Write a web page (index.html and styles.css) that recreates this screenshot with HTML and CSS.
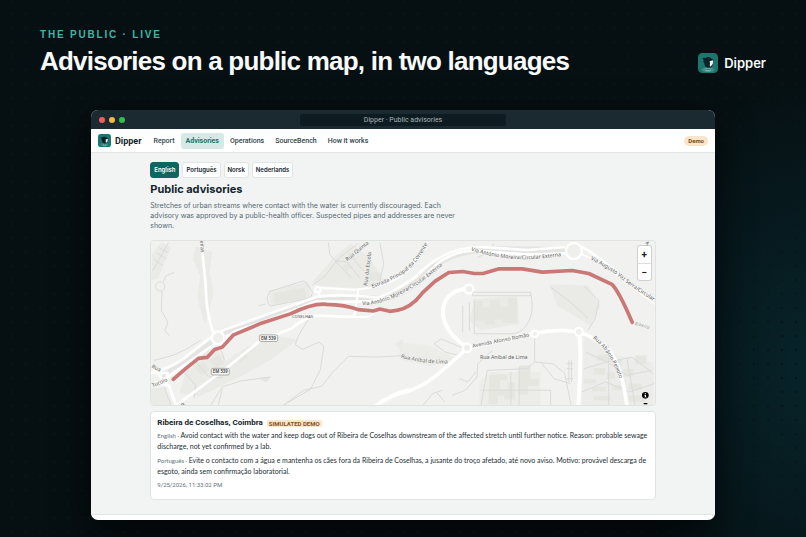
FILE: index.html
```html
<!DOCTYPE html>
<html lang="en">
<head>
<meta charset="utf-8">
<meta name="viewport" content="width=device-width, initial-scale=1">
<title>Dipper · Public advisories</title>
<link rel="stylesheet" href="styles.css">
</head>
<body>
<svg class="sprite" aria-hidden="true">
  <symbol id="dipper" viewBox="0 0 60 60">
    <rect width="60" height="60" rx="13" fill="#1c766e"/>
    <path d="M13 15l11-1c6-3 13-2 17 3l7 4-4 4c3 10-1 18-12 23-8-3-13-9-13-17-4-2-3-7-2-9z" fill="#0c2229"/>
    <path d="M35 25l10-3c1 9-1 14-8 19-3-4-1-7-1-10z" fill="#eef6f4"/>
    <ellipse cx="30" cy="50" rx="17" ry="5" fill="none" stroke="#8fc7bf" stroke-width="1.5"/>
    <ellipse cx="30" cy="50" rx="9" ry="3" fill="none" stroke="#d5ece8" stroke-width="1.5"/>
  </symbol>
</svg>
<header class="intro">
  <div>
    <p class="eyebrow">THE PUBLIC · LIVE</p>
    <h1>Advisories on a public map, in two languages</h1>
  </div>
  <div class="brand brand-large"><svg aria-hidden="true"><use href="#dipper"/></svg>Dipper</div>
</header>
<section class="window">
  <div class="titlebar">
    <div class="lights"><i class="red"></i><i class="amber"></i><i class="green"></i></div>
    <div class="address">Dipper · Public advisories</div>
  </div>
  <nav class="nav">
    <a class="brand" href="#"><svg aria-hidden="true"><use href="#dipper"/></svg>Dipper</a>
    <div class="links">
      <a href="#">Report</a><a href="#" class="current">Advisories</a><a href="#">Operations</a><a href="#">SourceBench</a><a href="#">How it works</a>
    </div>
    <span class="demo">Demo</span>
  </nav>
  <main>
    <div class="column">
      <div class="languages">
        <button class="selected">English</button><button>Português</button><button>Norsk</button><button>Nederlands</button>
      </div>
      <h2>Public advisories</h2>
      <p class="lead">Stretches of urban streams where contact with the water is currently discouraged. Each advisory was approved by a public-health officer. Suspected pipes and addresses are never shown.</p>
      <div class="map">
        <svg class="canvas" viewBox="15 15 1518 495" role="img" aria-label="Map of the Coselhas area">
          <defs>
            <path id="t-via1" d="M652 208Q700 209 765 178Q830 145 930 58"/>
            <path id="t-estrada" d="M682 157Q760 130 795 98Q830 65 880 -30"/>
            <path id="t-via2" d="M980 44Q1070 72 1150 70Q1210 68 1290 54"/>
            <path id="t-vaz" d="M1340 71Q1390 94 1435 130Q1480 168 1580 225"/>
            <path id="t-peixoto" d="M1347 308Q1400 350 1429 433L1434 450"/>
            <path id="t-lima" d="M768 366Q835 389 940 383"/>
            <path id="t-romao" d="M985 337L1190 296"/>
            <path id="t-stream" d="M1474 270Q1500 270 1545 296"/>
          </defs>
          <rect x="15" y="15" width="1518" height="498" fill="#f1f1ef"/>
          <g fill="#eaebe7">
            <path d="M18 55l28-36 30 14-40 94-20 6z"/>
            <path d="M150 30l50 20 -8 60 12 60-15 60-12 35-22-75 8-70-22-50z"/>
            <path d="M500 140l70-80 48-38 52 40 48 70-40 28-158-10z"/>
            <path d="M370 165l118-28 10 50-120 25z"/>
            <path d="M130 375l80-40 30 42 60-40 90-35 70 10-90 65-120 65-90 42-60-10z"/>
            <path d="M15 460l40-5 25 55-65 3z"/>
            <path d="M990 190l130-10 5 85-115 20-35-30z"/>
            <path d="M1215 145l120 5 35 60-30 60-100-60z"/>
            <path d="M1320 300l100 60 110 20v133h-215z" opacity=".6"/>
            <path d="M765 320l90 10 80 40-80 22-90-20z" opacity=".7"/>
            <path d="M1040 410h150v100h-185v-70z" opacity=".7"/>
            <path d="M750 325l25-15v40z"/>
          </g>
          <g fill="#e5e6e0">
            <path d="M991 195h26v20h20v-22h30v22h25v-28h26v75h-42v-10h-24v15h-30v-12h-31z"/>
            <path d="M1036 418h52v16h-20v28h22v-20h22v52h-32v-12h-20v25h-28z"/>
            <path d="M1125 390h34v40h26v22h-34v26h-28z"/>
            <path d="M1360 358h32v18h-32zM1405 372h30v18h-30zM1350 398h34v20h-34zM1320 430h36v14h-36zM1390 410h24v20h-24zM1440 400h30v24h-30zM1345 455h42v14h-42zM1405 450h28v16h-28zM1455 445h40v20h-40zM1350 482h50v14h-50zM1475 360h34v26h-34zM1455 480h50v20h-50z"/>
            <path d="M385 173l92-18 7 32-95 18zM190 375l28-15 20 22-28 16zM145 395l28-15 20 24-27 15zM275 365l24-14 10 14-24 14zM340 430l38-6-16 18zM590 95l18-14 12 14-18 14zM670 110h38v24h-38z"/>
          </g>
          <g fill="none" stroke="#dadbd9" stroke-width="3" stroke-linejoin="round">
            <path d="M20 105l28-50 20-35M24 70l28 20M33 52l28 16M40 36l28 15M48 165l-2 60 20 35-10 25 14 15M42 138a14 14 0 1 0 1 28a14 14 0 1 0-1-28M52 138l8-18 25-10"/>
            <path d="M365 185l8-18 102-32 12 10 15 25-5 16-118 25-10-5zM340 210l20-5"/>
            <path d="M500 150l40-30 40-52 60-46M550 20l4 35 16 20 35 2 40 50M610 50l45 55M705 20l12 65-15 60M570 75l50 52"/>
            <path d="M25 375l55-15 40-18 45-28M225 340l12 35M145 375l45 50 40 2M105 400l45 50-5 40M55 455l20 55"/>
            <path d="M490 250l-30 50-10 28 22 14 50-22 14 12-10 70-30 60-82 48-15 28M415 510l60-45 55-12 35-45 45-45 90 2 80-5"/>
            <path d="M195 510l35-55 55-18 90-12M230 460l-12 48"/>
            <path d="M985 170h175v10H985zM1160 175c15 60-10 118-60 120H990M955 210v80M975 200v85M990 190v105"/>
            <path d="M1218 153l60 45 55 50M1320 150l46 45-12 55-22 35"/>
            <path d="M955 338l-65-28-22 15 35 25 40 10M1045 345l-45 40-2 40-35 40-40 15M1172 305v75l-25 20-118 5-20 110M1172 380l55 5 35 28 20 98M1100 410v102M1125 395v115M1010 465h210v45M1325 350l65 30 75-15 65 50M1320 400l70-20 60 40 75-15M1315 470l70-30 75 30 72-25M1395 330v180M1450 370l25 140M1190 380l40 50 50 15"/>
            <path d="M835 510l30-35 28-10M875 470l25 30M945 430l25 10 25-30M1000 65l40-22 8-20"/>
            <path d="M1275 375v65M1283 375v65M1268 385h20M1268 400h20M1268 430h20"/>
          </g>
          <path d="M60 420L230 290Q400 235 500 192Q600 180 700 190Q790 180 870 90Q930 38 1060 40L1260 43" fill="none" stroke="#e4e5e3" stroke-width="20" stroke-linecap="round"/>
          <g fill="none" stroke="#fff" stroke-width="8" stroke-linecap="round" stroke-linejoin="round">
            <path d="M167 18L180 150Q182 240 204 292"/>
            <path d="M20 410Q70 400 110 372L190 310L230 285L515 183Q600 174 700 186Q745 170 810 125Q900 32 1010 33L1150 42L1260 34"/>
            <path d="M58 430L110 393L205 327L270 287Q410 240 510 198L640 198Q760 196 820 140L880 82Q930 45 990 44L1150 56L1265 52"/>
            <path d="M517 164L525 183M518 156L630 162 680 155Q755 140 790 103L850 20M640 162l-12 82h40q24-8 25-30" stroke-width="6"/>
            <path d="M92 510L240 400L345 315L440 278Q470 250 515 240L628 244"/>
            <path d="M20 398l50 55 20 58M30 440l42 12M15 413h50l-6 25"/>
            <path d="M1315 33Q1370 65 1430 118Q1480 168 1533 190"/>
            <path d="M1315 55Q1380 80 1440 135L1533 205" stroke-width="4"/>
          </g>
          <g fill="none" stroke="#fff" stroke-width="12" stroke-linecap="round">
            <path d="M960 160Q895 170 895 235Q900 290 968 336"/>
            <path d="M765 475Q835 460 905 395L970 338L1172 294Q1240 277 1305 290Q1355 302 1400 350Q1435 395 1450 512" stroke-width="11"/>
            <path d="M1305 290Q1315 350 1303 513"/>
            <path d="M693 512Q740 478 790 465"/>
          </g>
          <g fill="#efefed" stroke="#fff" stroke-width="7">
            <circle cx="217" cy="307" r="19"/><circle cx="518" cy="162" r="8"/>
            <circle cx="1290" cy="45" r="24"/><circle cx="974" cy="160" r="13"/>
            <circle cx="968" cy="337" r="13"/><circle cx="1172" cy="295" r="10"/><circle cx="1305" cy="289" r="12"/>
          </g>
          <path d="M82 432Q118 400 158 369L184 366L207 342L230 335L264 298L350 262L437 234Q505 201 545 206Q600 207 640 222L685 226L705 220L735 227Q780 226 813 195L835 170L872 136L913 110L955 107L990 113H1016L1065 99H1135L1195 109L1285 104L1335 113L1405 146Q1425 165 1466 260" fill="none" stroke="#c97876" stroke-width="11" stroke-linecap="round" stroke-linejoin="round"/>
          <g class="labels">
            <text><textPath href="#t-via1">Via António Moreira/Circular Externa</textPath></text>
            <text><textPath href="#t-estrada">Estrada Principal da Corrente</textPath></text>
            <text><textPath href="#t-via2">Via António Moreira/Circular Externa</textPath></text>
            <text><textPath href="#t-vaz">Via Augusto Vaz Serra/Circular</textPath></text>
            <text><textPath href="#t-peixoto">Rua Afrânio Peixoto</textPath></text>
            <text><textPath href="#t-lima">Rua Aníbal de Lima</textPath></text>
            <text><textPath href="#t-romao">Avenida Afonso Romão</textPath></text>
            <text x="1007" y="371">Rua Aníbal de Lima</text>
            <text transform="translate(607 76) rotate(-39)">Rua Quinta</text>
            <text transform="translate(667 151) rotate(-83)">Rua da Escola</text>
            <text transform="translate(163 14) rotate(86)">eiras</text>
            <text transform="translate(16 397) rotate(25)">Rua</text>
            <text transform="translate(20 456) rotate(-22)">Tucolo</text>
            <text transform="translate(112 516) rotate(-45)">R</text>
            <text transform="translate(1504 22) rotate(45)">A</text>
            <text class="place" x="440" y="247">COSELHAS</text>
            <text class="stream"><textPath href="#t-stream">Ribeira</textPath></text>
          </g>
          <g class="shield">
            <rect x="342" y="298" width="55" height="20" rx="4"/><text x="369" y="313">EM 539</text>
            <rect x="197" y="399" width="54" height="20" rx="4"/><text x="224" y="414">EM 539</text>
          </g>
        </svg>
        <div class="zoom">
          <button aria-label="Zoom in">+</button>
          <button aria-label="Zoom out">−</button>
        </div>
        <button class="info" aria-label="Map information">
          <svg viewBox="0 0 21 39" aria-hidden="true"><circle cx="10" cy="10" r="10"/><path d="M8 4h4v3H8zM7 9h5v5h2v2H7v-2h2v-3H7z" fill="#fff"/><path d="M5 33h11v4H5z"/></svg>
        </button>
      </div>
      <article class="advisory">
        <h3>Ribeira de Coselhas, Coimbra <span class="simulated">SIMULATED DEMO</span></h3>
        <p><small>English · </small>Avoid contact with the water and keep dogs out of Ribeira de Coselhas downstream of the affected stretch until further notice. Reason: probable sewage discharge, not yet confirmed by a lab.</p>
        <p lang="pt"><small>Português · </small>Evite o contacto com a água e mantenha os cães fora da Ribeira de Coselhas, a jusante do troço afetado, até novo aviso. Motivo: provável descarga de esgoto, ainda sem confirmação laboratorial.</p>
        <time datetime="2026-09-25T23:33:02">9/25/2026, 11:33:02 PM</time>
      </article>
    </div>
  </main>
</section>
</body>
</html>
```
FILE: styles.css
```css
* { box-sizing: border-box; }
body {
  margin: 0;
  min-height: 100vh;
  padding: 28px 0 19px;
  background:
    radial-gradient(circle, #0b1518 0 1px, transparent 1px) 5px 7px / 14px 14px,
    radial-gradient(ellipse 180px 300px at 100% 68%, #07242a, transparent),
    #060f12;
  font-family: Roboto, "Liberation Sans", sans-serif;
  color: #12242b;
}
h1, h2, h3, p { margin: 0; }
a { color: inherit; text-decoration: none; }
button { font: inherit; color: inherit; padding: 0; border: 0; cursor: pointer; }
.sprite { position: absolute; width: 0; height: 0; }

.intro { display: flex; justify-content: space-between; align-items: flex-end; padding: 0 40px; margin-bottom: 32px; color: #f8fafb; }
.eyebrow { font: bold 10px/14px "Liberation Sans", sans-serif; letter-spacing: 0.18em; color: #42b4a6; }
h1 { font: bold 26px/34px "Liberation Sans", sans-serif; letter-spacing: -0.03em; margin-top: 2px; }

.brand { display: flex; align-items: center; gap: 4px; font-size: 9px; font-weight: 700; }
.brand svg { width: 13px; height: 13px; }
.brand-large { gap: 6px; font-family: Inter, sans-serif; font-size: 13px; font-weight: 600; margin-bottom: 5px; }
.brand-large svg { width: 20px; height: 20px; }

.window { margin: 0 91px; border-radius: 7px; overflow: hidden; background: #fff; box-shadow: 0 12px 36px #000a; padding-bottom: 5px; }
.titlebar { display: grid; grid-template-columns: 1fr 2fr 1fr; align-items: center; height: 19px; padding: 0 8px; background: #1b2a31; }
.lights { display: flex; gap: 4px; }
.lights i { width: 6px; height: 6px; border-radius: 50%; }
.red { background: #f15f5b; }
.amber { background: #f5b642; }
.green { background: #32c04a; }
.address { justify-self: center; width: 68%; border-radius: 3px; background: #0e1b20; color: #a9b5ba; font-size: 7px; line-height: 12px; text-align: center; }

.nav { display: flex; align-items: center; gap: 7px; height: 24px; padding: 0 7px; border-bottom: 1px solid #e3e7e6; }
.links { display: flex; gap: 1px; flex: 1; font-size: 7px; line-height: 16px; font-weight: 500; color: #2f434a; }
.links a { padding: 0 5px; border-radius: 3px; }
.links .current { background: #d7e9e6; color: #1b736c; font-weight: 700; }
.demo { padding: 0 4px; border-radius: 5px; background: #f9e5c9; color: #7d4a16; font-size: 6px; line-height: 10px; font-weight: 700; }

main { background: #f2f4f4; border-bottom: 1px solid #e0e4e3; padding: 9px 0 14px; }
.column { width: 81%; margin: 0 auto; }
.languages { display: flex; gap: 3px; font-family: Inter, sans-serif; font-size: 6px; line-height: 14px; font-weight: 600; }
.languages button { padding: 0 3px; border: 1px solid #dfe4e4; border-radius: 3px; background: #fff; }
.languages .selected { background: #0f6660; border-color: #0f6660; color: #fff; }
h2 { margin-top: 4px; font-family: Inter, sans-serif; font-size: 11px; line-height: 14px; font-weight: 700; }
.lead { max-width: 308px; margin: 5px 0 9px; font-family: Inter, sans-serif; font-size: 7px; line-height: 10px; color: #566970; }

.map { position: relative; border: 1px solid #dfe3e2; border-radius: 4px; overflow: hidden; }
.canvas { display: block; width: 100%; height: auto; }
.labels { font-family: "Noto Sans", sans-serif; font-size: 16px; fill: #5c5c5c; stroke: #f6f6f4; stroke-width: 2px; paint-order: stroke; }
.labels .place { font-size: 13px; }
.labels .stream { font-size: 14px; fill: #999; font-style: italic; }
.shield rect { fill: #f8f8f7; stroke: #888; stroke-width: 2px; }
.shield text { font: bold 13px "Noto Sans", sans-serif; fill: #555; text-anchor: middle; }
.zoom { position: absolute; top: 5px; right: 4px; width: 13px; border-radius: 2px; background: #fff; box-shadow: 0 0 0 1px #0002; }
.zoom button { display: block; width: 100%; height: 17px; background: none; font-size: 10px; line-height: 17px; font-weight: 700; color: #222; }
.zoom button + button { border-top: 1px solid #ddd; }
.info { position: absolute; right: 6px; bottom: 0; width: 7px; height: 13px; background: none; }
.info svg { display: block; width: 7px; height: 13px; }

.advisory { margin-top: 5px; padding: 6px 6px 9px; border: 1px solid #e0e4e4; border-radius: 4px; background: #fff; font-size: 7px; line-height: 10px; color: #25373e; }
h3 { display: flex; align-items: center; gap: 4px; font-size: 8px; line-height: 10px; font-weight: 700; margin-bottom: 2px; color: #12242b; }
.simulated { padding: 0 2px; border-radius: 2px; background: #fae6cb; color: #855322; font-size: 6px; line-height: 7px; }
.advisory p { margin-bottom: 4px; font-family: Lato, "Liberation Sans", sans-serif; color: #1b2d34; }
.advisory small, .advisory time { font-size: 6px; color: #607279; }
.advisory time { display: block; }
```
